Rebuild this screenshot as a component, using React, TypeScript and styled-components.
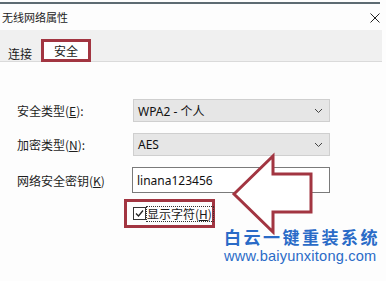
import styled, { createGlobalStyle } from "styled-components";

const GlobalStyle = createGlobalStyle`
  html, body {
    margin: 0;
    padding: 0;
    background: #ffffff;
  }
  body {
    font-family: "Noto Sans", "Noto Sans CJK SC", sans-serif;
    color: #1a1a1a;
  }
`;

const Window = styled.div`
  position: relative;
  width: 386px;
  height: 281px;
  overflow: hidden;
  background: #fdfdfd;
`;

const TopLine = styled.div`
  margin-top: 2px;
  width: 380px;
  height: 2px;
  background: #5d6b72;
`;

const TitleBar = styled.div`
  height: 26px;
  width: 384px;
  display: flex;
  align-items: center;
  justify-content: space-between;
  font-size: 11px;
  padding-left: 2px;
  box-sizing: border-box;
  font-family: "Noto Sans CJK SC", sans-serif;
  color: #222;
`;

const Close = styled.span`
  width: 10px;
  height: 10px;
  margin-right: 4px;
  margin-top: 1px;
  display: flex;
`;

const TabStrip = styled.div`
  width: 382px;
  height: 32px;
  background: #f0f0f0;
  border-bottom: 1px solid #dadada;
  box-sizing: border-box;
  display: flex;
  align-items: flex-end;
`;

const Tab = styled.div<{ $active?: boolean }>`
  font-size: 12px;
  font-family: "Noto Sans CJK SC", sans-serif;
  box-sizing: border-box;
  display: flex;
  align-items: center;
  justify-content: center;
  margin-bottom: -1px;
  ${(p) =>
    p.$active
      ? `
    width: 50px;
    height: 23px;
    background: #ffffff;
    border: 3px solid #a23541;
    margin-left: 1px;
  `
      : `
    width: 40px;
    height: 20px;
    padding-top: 2px;
  `}
`;

const Form = styled.div`
  margin-top: 37px;
  display: grid;
  grid-template-columns: 116px 197px;
  row-gap: 11px;
  padding-left: 17px;
`;

const Label = styled.label`
  font-size: 12px;
  font-family: "Noto Sans CJK SC", sans-serif;
  display: flex;
  align-items: center;
  white-space: nowrap;
  color: #1e1e1e;
  u {
    text-decoration: underline;
    text-underline-offset: 1px;
  }
`;

const Select = styled.div`
  height: 23px;
  box-sizing: border-box;
  background: #e6e6e6;
  border: 1px solid #cfcfcf;
  display: flex;
  align-items: center;
  justify-content: space-between;
  padding: 0 6px 0 4px;
  font-size: 12px;
  font-family: "Noto Sans", "Noto Sans CJK SC", sans-serif;
  color: #111;
`;

const TextBox = styled.div`
  height: 26px;
  margin-left: -1px;
  box-sizing: border-box;
  background: #fff;
  border: 1px solid #7a7a7a;
  display: flex;
  align-items: center;
  padding-left: 4px;
  font-size: 12px;
  font-family: "Noto Sans", sans-serif;
  color: #111;
`;

const CheckRow = styled.div`
  margin: 6px 0 0 124px;
  width: 91px;
  height: 29px;
  box-sizing: border-box;
  border: 3px solid #a23541;
  display: flex;
  align-items: center;
  padding-left: 6px;
  gap: 1px;
  white-space: nowrap;
`;

const Box = styled.span`
  flex: none;
  width: 13px;
  height: 13px;
  box-sizing: border-box;
  border: 1px solid #333;
  background: #fff;
  display: flex;
  align-items: center;
  justify-content: center;
`;

const CheckText = styled.span`
  font-size: 12px;
  font-family: "Noto Sans CJK SC", sans-serif;
  outline: 1px dotted #333;
  outline-offset: 0px;
  line-height: 14px;
  padding: 0 1px 0 0;
  white-space: nowrap;
  u {
    text-underline-offset: 1px;
  }
`;

const Arrow = styled.svg`
  position: absolute;
  left: 0;
  top: 0;
`;

const Watermark = styled.div`
  position: absolute;
  left: 224px;
  top: 228px;
  display: flex;
  flex-direction: column;
  align-items: flex-start;
  color: #2a6bc7;
  text-shadow: 0 0 2px #fff, 0 0 2px #fff;
`;

const Brand = styled.div`
  font-size: 17px;
  font-weight: 700;
  letter-spacing: 2.5px;
  line-height: 18px;
  font-family: "Noto Sans CJK SC", sans-serif;
`;

const Url = styled.div`
  margin-top: 3px;
  font-size: 14.6px;
  line-height: 14px;
  font-family: "Liberation Sans", sans-serif;
  letter-spacing: 0.2px;
`;

const Chevron = () => (
  <svg width="9" height="6" viewBox="0 0 9 6">
    <path d="M1 1 L4.5 4.5 L8 1" fill="none" stroke="#444" strokeWidth="1" />
  </svg>
);

export default function App() {
  return (
    <Window>
      <GlobalStyle />
      <TopLine />
      <TitleBar>
        <span>无线网络属性</span>
        <Close>
          <svg width="10" height="10" viewBox="0 0 10 10">
            <path d="M0.5 0.5 L9.5 9.5 M9.5 0.5 L0.5 9.5" stroke="#222" strokeWidth="1" />
          </svg>
        </Close>
      </TitleBar>
      <TabStrip>
        <Tab>连接</Tab>
        <Tab $active>安全</Tab>
      </TabStrip>
      <Form>
        <Label>
          安全类型(<u>E</u>):
        </Label>
        <Select>
          <span>WPA2 - 个人</span>
          <Chevron />
        </Select>
        <Label>
          加密类型(<u>N</u>):
        </Label>
        <Select>
          <span>AES</span>
          <Chevron />
        </Select>
        <Label>
          网络安全密钥(<u>K</u>)
        </Label>
        <TextBox>linana123456</TextBox>
      </Form>
      <CheckRow>
        <Box>
          <svg width="11" height="11" viewBox="0 0 11 11">
            <path d="M2 5.5 L4.5 8 L9 2.5" fill="none" stroke="#222" strokeWidth="1.3" />
          </svg>
        </Box>
        <CheckText>
          显示字符(<u>H</u>)
        </CheckText>
      </CheckRow>
      <Arrow width="386" height="281" viewBox="0 0 386 281">
        <polygon
          points="234,194 273,156 273,174 311,174 311,212 273,212 273,232"
          fill="#ffffff"
          stroke="#a23541"
          strokeWidth="3"
          strokeLinejoin="miter"
        />
      </Arrow>
      <Watermark>
        <Brand>白云一键重装系统</Brand>
        <Url>www.baiyunxitong.com</Url>
      </Watermark>
    </Window>
  );
}
